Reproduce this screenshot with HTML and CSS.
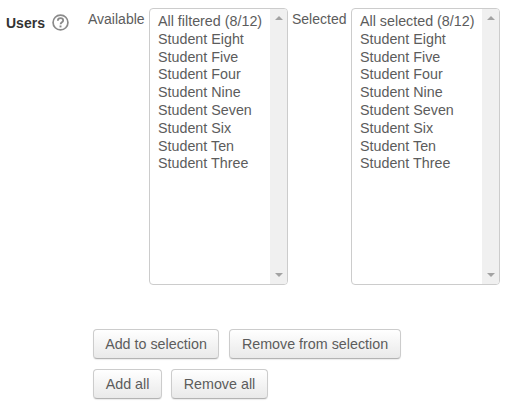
FILE: index.html
```html
<!DOCTYPE html>
<html lang="en">
<head>
    <meta charset="UTF-8">
    <title>Users</title>
    <link rel="stylesheet" href="styles.css">
</head>
<body>
    <div class="field">
        <div class="field-label">
            <b>Users</b>
            <svg class="help-icon" width="17" height="17" viewBox="0 0 16 16">
                <circle cx="8" cy="8" r="7" fill="none" stroke="#8a8a8a" stroke-width="1.6"/>
                <path d="M5.5 6.3c0-1.5 1.1-2.4 2.5-2.4s2.5.9 2.5 2.1c0 1.9-2.4 1.8-2.4 3.7" fill="none" stroke="#8a8a8a" stroke-width="1.7"/>
                <rect x="7.1" y="10.8" width="1.8" height="1.8" fill="#8a8a8a"/>
            </svg>
        </div>

        <span class="list-label available-label">Available</span>
        <div class="listbox available-box">
            <ul>
                <li>All filtered (8/12)</li>
                <li>Student Eight</li>
                <li>Student Five</li>
                <li>Student Four</li>
                <li>Student Nine</li>
                <li>Student Seven</li>
                <li>Student Six</li>
                <li>Student Ten</li>
                <li>Student Three</li>
            </ul>
            <div class="scrollbar">
                <span class="arrow-up"></span>
                <span class="arrow-down"></span>
            </div>
        </div>

        <span class="list-label selected-label">Selected</span>
        <div class="listbox selected-box">
            <ul>
                <li>All selected (8/12)</li>
                <li>Student Eight</li>
                <li>Student Five</li>
                <li>Student Four</li>
                <li>Student Nine</li>
                <li>Student Seven</li>
                <li>Student Six</li>
                <li>Student Ten</li>
                <li>Student Three</li>
            </ul>
            <div class="scrollbar">
                <span class="arrow-up"></span>
                <span class="arrow-down"></span>
            </div>
        </div>
    </div>

    <div class="actions">
        <div class="button-row">
            <button class="btn-add">Add to selection</button>
            <button class="btn-remove">Remove from selection</button>
        </div>
        <div class="button-row tight">
            <button class="btn-add-all">Add all</button>
            <button class="btn-remove-all">Remove all</button>
        </div>
    </div>
</body>
</html>
```

FILE: styles.css
```css
html, body {
    margin: 0;
    padding: 0;
    background: #fff;
}

body {
    width: 530px;
    height: 405px;
    overflow: hidden;
    font-family: "Liberation Sans", Arial, sans-serif;
    font-size: 14.3px;
    color: #5c5c5c;
}

.field {
    display: flex;
    align-items: flex-start;
    padding: 8px 0 0 6px;
}

.field-label {
    width: 82px;
    display: flex;
    align-items: center;
    padding-top: 6px;
    color: #333;
    font-size: 14px;
}

.help-icon {
    margin-left: 7px;
}

.list-label {
    padding-top: 2px;
    line-height: 18px;
    font-size: 14px;
}

.available-label {
    width: 61px;
}

.selected-label {
    width: 59px;
}

.listbox {
    display: flex;
    justify-content: space-between;
    height: 277px;
    box-sizing: border-box;
    border: 1px solid #ccc;
    border-radius: 4px;
    overflow: hidden;
}

.available-box {
    width: 139px;
    margin-right: 4px;
}

.selected-box {
    width: 149px;
}

.listbox ul {
    list-style: none;
    margin: 0;
    padding: 4px 0 0 8px;
    line-height: 17.8px;
    white-space: nowrap;
}

.scrollbar {
    width: 17px;
    flex: none;
    background: #f0f0f0;
    display: flex;
    flex-direction: column;
    justify-content: space-between;
    align-items: center;
    padding: 7px 0;
    box-sizing: border-box;
}

.arrow-up, .arrow-down {
    width: 0;
    height: 0;
    border-left: 4px solid transparent;
    border-right: 4px solid transparent;
}

.arrow-up {
    border-bottom: 4px solid #a3a3a3;
}

.arrow-down {
    border-top: 4px solid #a3a3a3;
}

.actions {
    padding: 44px 0 0 93px;
}

.button-row {
    display: flex;
    gap: 10px;
    margin-bottom: 10px;
}

.button-row.tight {
    gap: 9px;
}

button {
    height: 30px;
    padding: 0;
    font-family: inherit;
    font-size: 14.3px;
    color: #5c5c5c;
    background: linear-gradient(#fff, #e9e9e9);
    border: 1px solid #ccc;
    border-bottom-color: #b3b3b3;
    border-radius: 4px;
    box-shadow: 0 1px 1px rgba(0, 0, 0, 0.08);
}

.btn-add {
    width: 126px;
}

.btn-remove {
    width: 172px;
}

.btn-add-all {
    width: 69px;
}

.btn-remove-all {
    width: 97px;
}
```
